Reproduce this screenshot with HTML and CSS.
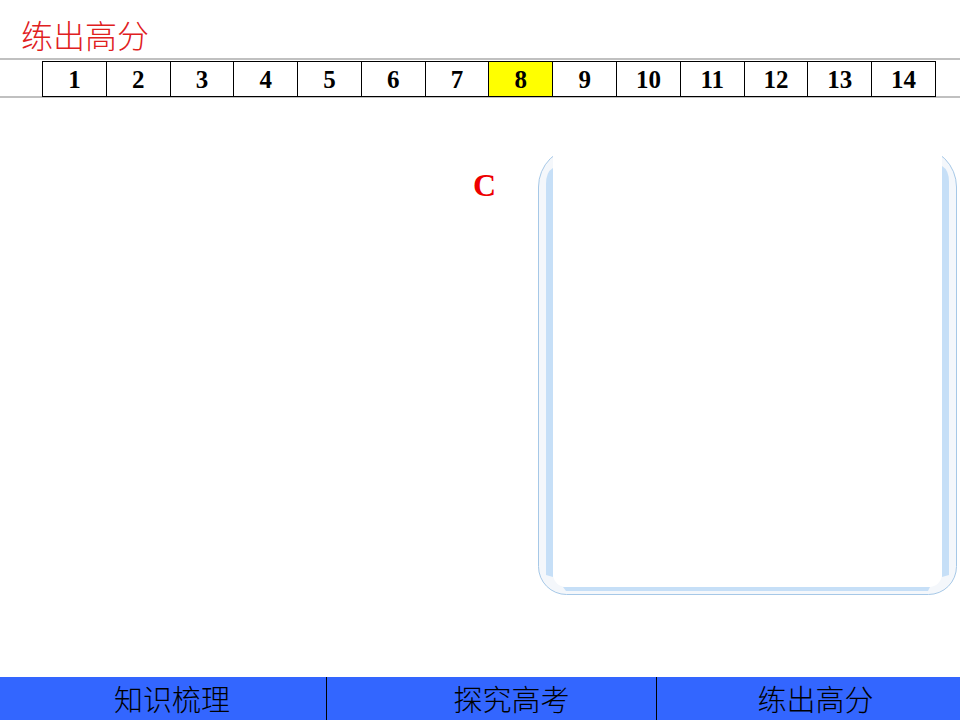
FILE: index.html
```html
<!DOCTYPE html>
<html lang="zh-CN">
<head>
<meta charset="utf-8">
<title>练出高分</title>
<link rel="stylesheet" href="styles.css">
</head>
<body>
<div class="page">
  <header class="top">
    <h1 class="title">练出高分</h1>
    <nav class="pager">
      <table class="pages">
        <tr>
          <td>1</td><td>2</td><td>3</td><td>4</td><td>5</td><td>6</td><td>7</td>
          <td class="current">8</td>
          <td>9</td><td>10</td><td>11</td><td>12</td><td>13</td><td>14</td>
        </tr>
      </table>
    </nav>
  </header>

  <main class="stage">
    <div class="answer">C</div>
    <svg class="frame" width="430" height="450" viewBox="530 154 430 450" aria-hidden="true">
      <!-- outer rounded panel, open at the top -->
      <path class="frame-outer" d="M538.5,187 A40,40 0 0 1 578.5,147 L916.5,147 A40,40 0 0 1 956.5,187 L956.5,566.5 A28,28 0 0 1 928.5,594.5 L566.5,594.5 A28,28 0 0 1 538.5,566.5 Z"/>
      <!-- light blue inner bands -->
      <path class="frame-band" d="M546,184 Q546,172 553,168 L553,577 L546,575 Z"/>
      <path class="frame-band" d="M942,166 Q949,170 949,182 L949,575 L942,577 Z"/>
      <path class="frame-band" d="M563,587 L930,587 L928,591 L566,591 Z"/>
      <!-- white content area -->
      <path class="frame-inner" d="M553,140 L942,140 L942,574 A13,13 0 0 1 929,587 L566,587 A13,13 0 0 1 553,574 Z"/>
    </svg>
  </main>

  <footer class="tabs">
    <div class="tab tab-first">知识梳理</div>
    <div class="tab tab-second">探究高考</div>
    <div class="tab tab-third">练出高分</div>
  </footer>
</div>
</body>
</html>
```

FILE: styles.css
```css
html, body {
  margin: 0;
  padding: 0;
  height: 100%;
  background: #ffffff;
  overflow: hidden;
}

.page {
  display: flex;
  flex-direction: column;
  height: 720px;
  width: 960px;
}

/* ---- header: title + page numbers ---- */
.title {
  margin: 0 0 8px 0;
  padding: 18px 0 0 21px;
  font-family: "Noto Sans CJK SC", sans-serif;
  font-weight: 300;
  font-size: 32px;
  line-height: 32px;
  color: #e0201e;
}

.pager {
  border-top: 2px solid #c0c0c0;
  border-bottom: 2px solid #c0c0c0;
  padding: 1px 0 0 42px;
}

.pages {
  border-collapse: collapse;
  table-layout: fixed;
  width: 894px;
  height: 36px;
  margin-bottom: -1px;
  background: #ffffff;
}

.pages td {
  border: 1px solid #000000;
  padding: 0;
  text-align: center;
  vertical-align: middle;
  font-family: "Liberation Serif", serif;
  font-weight: 700;
  font-size: 25px;
  line-height: 25px;
  color: #000000;
}

.pages td.current {
  background: #ffff00;
}

/* ---- main area ---- */
.stage {
  flex: 1;
  display: grid;
  grid-template-columns: 530px 430px;
  align-items: start;
}

.answer {
  justify-self: end;
  padding: 71px 34px 0 0;
  font-family: "Liberation Serif", serif;
  font-weight: 700;
  font-size: 32px;
  line-height: 32px;
  color: #ee0000;
}

.frame {
  display: block;
  margin-top: 56px;
}

.frame-outer {
  fill: #f4f7fb;
  stroke: #a6c8e7;
  stroke-width: 1;
}

.frame-band {
  fill: #c6dff7;
}

.frame-inner {
  fill: #ffffff;
}

/* ---- bottom tab bar ---- */
.tabs {
  display: grid;
  grid-template-columns: 326px 330px 1fr;
  height: 43px;
  background: #3366ff;
}

.tab {
  font-family: "Noto Sans CJK SC", sans-serif;
  font-weight: 300;
  font-size: 29px;
  line-height: 43px;
  color: #000000;
  text-align: center;
  white-space: nowrap;
}

.tab-first {
  padding-left: 18px;
}

.tab-second {
  border-left: 1px solid #000000;
  padding-left: 40px;
}

.tab-third {
  border-left: 1px solid #000000;
  padding-left: 14px;
}
```
